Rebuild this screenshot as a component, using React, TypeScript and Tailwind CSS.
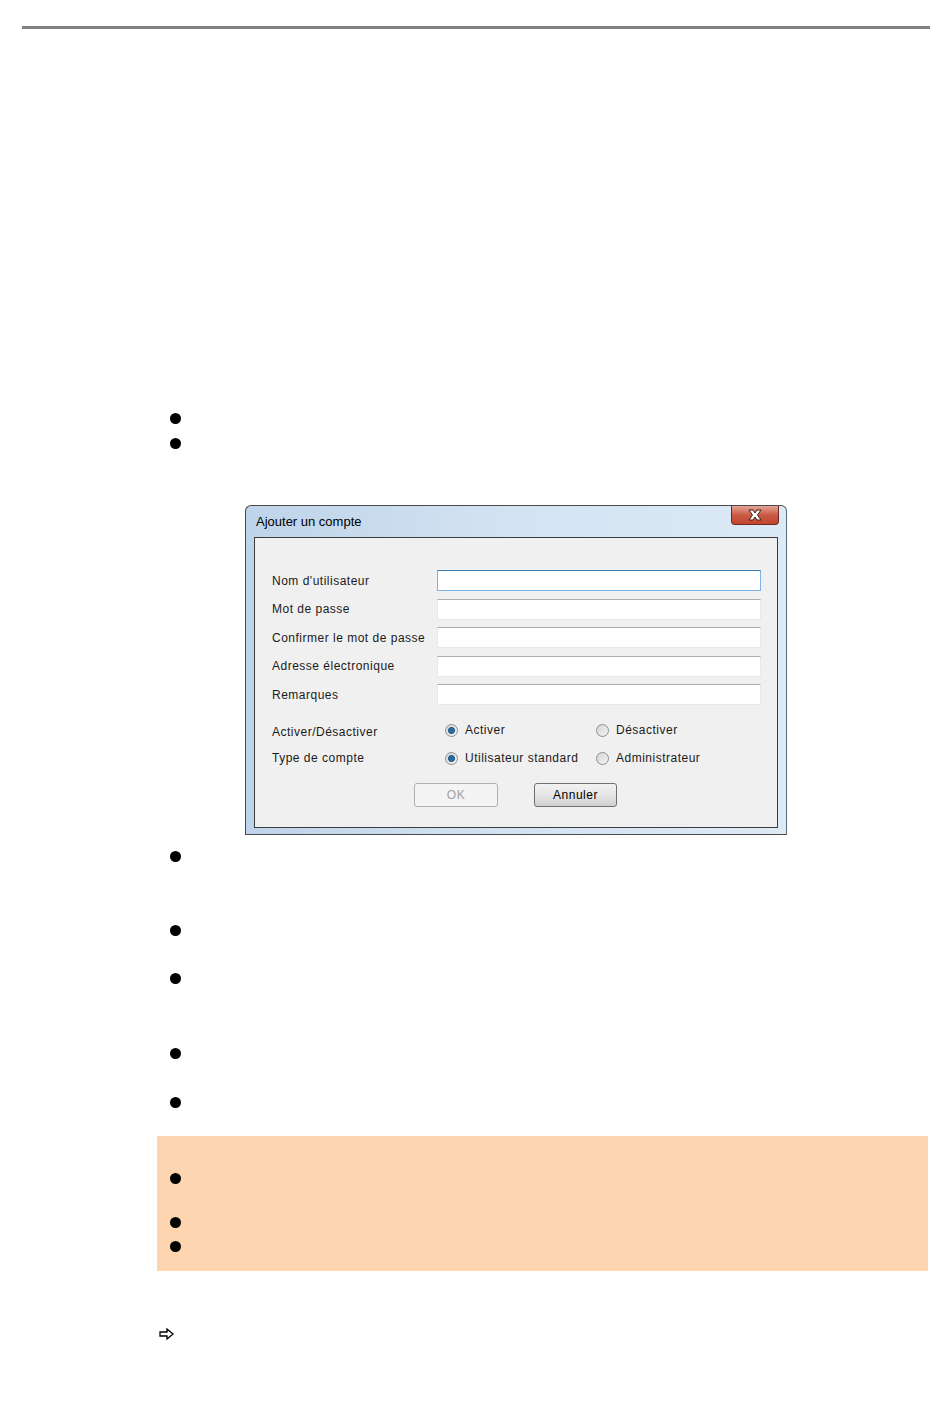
import React from 'react';

const dlgFont = { fontFamily: '"Liberation Sans", Arial, sans-serif' };

const Bullet: React.FC<{ h?: string }> = ({ h = 'h-[24px]' }) => (
  <div className={`flex items-center pl-[170px] ${h}`}>
    <span className="block w-[11px] h-[11px] rounded-full bg-black" />
  </div>
);

const TextField: React.FC<{ focused?: boolean }> = ({ focused }) => (
  <div
    className={
      focused
        ? 'w-[324px] h-[21px] bg-white border border-[#7eb4ea] border-t-[#3d7bad]'
        : 'w-[324px] h-[21px] bg-white border border-[#e3e9ef] border-t-[#abadb3]'
    }
  />
);

const Radio: React.FC<{ checked?: boolean; label: string }> = ({ checked, label }) => (
  <div className="flex items-center gap-[7px]">
    <span className="flex items-center justify-center w-[13px] h-[13px] rounded-full border border-[#8e8f8f] bg-gradient-to-br from-[#d4d4d4] to-[#f5f5f5]">
      {checked && (
        <span className="w-[7px] h-[7px] rounded-full bg-[#1a6aa7] border border-[#0d3f66] shadow-[inset_0_0_1px_#8fd0ff]" />
      )}
    </span>
    <span className="text-[12px] text-[#1a1a1a] tracking-[0.5px]">{label}</span>
  </div>
);

const CloseGlyph: React.FC = () => (
  <svg width="16" height="12" viewBox="0 0 16 12" className="block">
    <path
      d="M2 1 H6 L8 4 L10 1 H14 L10.5 6 L14 11 H10 L8 8 L6 11 H2 L5.5 6 Z"
      fill="white"
      stroke="#4a1c14"
      strokeWidth="1"
      strokeLinejoin="round"
    />
  </svg>
);

const Dialog: React.FC = () => {
  const rows = ["Nom d'utilisateur", 'Mot de passe', 'Confirmer le mot de passe', 'Adresse électronique', 'Remarques'];
  return (
    <div
      className="ml-[245px] w-[542px] h-[330px] border border-[#4a4a4a] border-r-[#5a6a78] rounded-t-[6px] bg-gradient-to-r from-[#bed4ea] via-[#d4e3f2] to-[#dceaf6] flex flex-col"
      style={dlgFont}
    >
      <div className="h-[31px] flex items-start justify-between pl-[10px] pr-[7px]">
        <span className="text-[13px] text-black pt-[6px]">Ajouter un compte</span>
        <div className="w-[48px] h-[19px] rounded-b-[4px] border border-[#6b2a22] border-t-0 bg-gradient-to-b from-[#e3a496] via-[#c95a44] to-[#c2442e] flex items-center justify-center">
          <CloseGlyph />
        </div>
      </div>
      <div className="mx-[8px] flex-1 bg-[#f0f0f0] border border-[#3c3c3c] flex flex-col pt-[32px] pl-[17px]">
        <div className="flex flex-col gap-[7.5px]">
          {rows.map((r, i) => (
            <div key={r} className="flex items-center h-[21px]">
              <span className="w-[165px] text-[12px] text-[#1a1a1a] tracking-[0.5px] whitespace-nowrap">{r}</span>
              <TextField focused={i === 0} />
            </div>
          ))}
        </div>
        <div className="mt-[18px] flex flex-col gap-[14px]">
          <div className="flex items-center h-[14px]">
            <span className="w-[173px] text-[12px] text-[#1a1a1a] tracking-[0.5px] pt-[3px]">Activer/Désactiver</span>
            <div className="w-[151px]">
              <Radio checked label="Activer" />
            </div>
            <Radio label="Désactiver" />
          </div>
          <div className="flex items-center h-[14px]">
            <span className="w-[173px] text-[12px] text-[#1a1a1a] tracking-[0.5px]">Type de compte</span>
            <div className="w-[151px]">
              <Radio checked label="Utilisateur standard" />
            </div>
            <Radio label="Administrateur" />
          </div>
        </div>
        <div className="mt-[18px] flex gap-[36px] pl-[142px]">
          <div className="w-[84px] h-[24px] rounded-[3px] border border-[#adb2b5] bg-[#f4f4f4] flex items-center justify-center text-[12px] text-[#a0a0a0] tracking-[0.5px]">
            OK
          </div>
          <div className="w-[83px] h-[24px] rounded-[3px] border border-[#707070] bg-gradient-to-b from-[#f2f2f2] via-[#e6e6e6] to-[#cfcfcf] flex items-center justify-center text-[12px] text-black tracking-[0.5px]">
            Annuler
          </div>
        </div>
      </div>
      <div className="h-[6px]" />
    </div>
  );
};

const ArrowIcon: React.FC = () => (
  <svg width="16" height="12" viewBox="0 0 16 12" className="block">
    <path d="M1 4 H8 V1 L14 6 L8 11 V8 H1 Z" fill="white" stroke="black" strokeWidth="1.3" strokeLinejoin="miter" />
  </svg>
);

export default function App() {
  return (
    <div className="w-[950px] h-[1420px] bg-white overflow-hidden">
      <div className="mt-[26px] ml-[22px] w-[908px] h-[3px] bg-[#808080]" />

      <div className="mt-[377px]">
        <Bullet h="h-[25px]" />
        <Bullet h="h-[25px]" />
      </div>

      <div className="mt-[49px]">
        <Dialog />
      </div>

      <div className="mt-[9px]">
        <Bullet />
        <div className="h-[50px]" />
        <Bullet />
        <div className="h-[24px]" />
        <Bullet />
        <div className="h-[51px]" />
        <Bullet />
        <div className="h-[25px]" />
        <Bullet />
      </div>

      <div className="mt-[22px] ml-[157px] w-[771px] h-[135px] bg-[#fdd5b1] pt-[30px]">
        <div className="-ml-[157px]">
          <Bullet />
          <div className="h-[20px]" />
          <Bullet />
          <Bullet />
        </div>
      </div>

      <div className="mt-[57px] pl-[159px]">
        <ArrowIcon />
      </div>
    </div>
  );
}
